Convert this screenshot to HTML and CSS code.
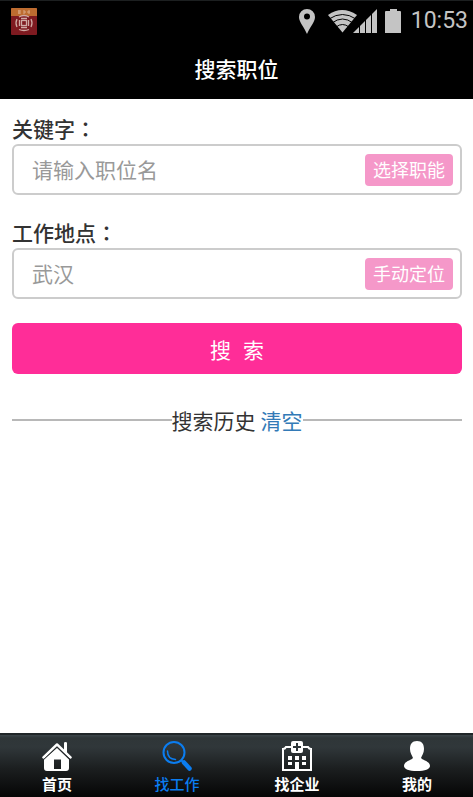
FILE: index.html
```html
<!DOCTYPE html>
<html lang="zh-CN">
<head>
<meta charset="utf-8">
<meta name="viewport" content="width=device-width, initial-scale=1">
<title>搜索职位</title>
<link rel="stylesheet" href="styles.css">
</head>
<body>
<div class="app">
  <header class="top">
    <div class="status">
      <svg class="app-icon" width="26" height="27" viewBox="0 0 26 27" aria-hidden="true">
        <rect width="26" height="27" rx="1" fill="#7e1a20"/>
        <path d="M0 1q0-1 1-1h24q1 0 1 1v7H0z" fill="#bd6c30"/>
        <path d="M7 3h3M7 5h3M8 2v4M12 3h2v2h-2M16 4h3M18 2v4" stroke="#d9a783" fill="none"/>
        <g fill="none" stroke="#cfa9a4" stroke-width="1.3">
          <path d="M8 9q5-3 10 0M8 21.500q5 2 10 0M6 11q-2 4 0 8M20 11q2 4 0 8M8.500 12v6M17.500 12v6M10 10.500h6M10 19.500h6"/>
          <rect x="10.500" y="12.500" width="5" height="5"/>
        </g>
      </svg>
      <div class="signals">
        <svg class="pin" width="16" height="25" viewBox="0 0 16 25" aria-hidden="true"><path fill-rule="evenodd" d="M8 0a8 8 0 0 1 8 8c0 5-5 10-8 17C5 18 0 13 0 8a8 8 0 0 1 8-8zm0 4.500a3 3 0 1 0 0 6 3 3 0 0 0 0-6z" fill="#c4c4c4"/></svg>
        <svg class="wifi" width="49" height="24" viewBox="0 0 49 24" aria-hidden="true">
          <path d="M0 6Q14-4 29 6L14.500 23.500z" fill="#c4c4c4"/>
          <path d="M1 10Q14.500 1 28 10M4 14Q14.500 6 25 14M8 18Q14.500 13 21 18" fill="none" stroke="#000" stroke-width="1"/>
          <path d="M25 24L49 0v24z" fill="#c4c4c4"/>
          <path d="M31.500 12v12M37.500 8v16M43.500 2v22" stroke="#000" stroke-width="1"/>
        </svg>
        <svg class="battery" width="16" height="24" viewBox="0 0 16 24" aria-hidden="true"><path d="M5 0h7v2h3q1 0 1 1v21H0V3q0-1 1-1h4z" fill="#c4c4c4"/></svg>
        <time class="clock">10:53</time>
      </div>
    </div>
    <h1 class="title">搜索职位</h1>
  </header>

  <main class="content">
    <form class="search">
      <div class="field">
        <label class="label" for="keyword">关键字<span class="colon" lang="zh-TW">：</span></label>
        <div class="box">
          <input class="input" id="keyword" type="text" placeholder="请输入职位名">
          <button class="pick" type="button">选择职能</button>
        </div>
      </div>
      <div class="field">
        <label class="label" for="place">工作地点<span class="colon" lang="zh-TW">：</span></label>
        <div class="box">
          <input class="input" id="place" type="text" placeholder="武汉">
          <button class="pick" type="button">手动定位</button>
        </div>
      </div>
      <button class="submit" type="submit"><span>搜</span><span>索</span></button>
    </form>
    <section class="history">
      <h2 class="history-title">搜索历史</h2>
      <a class="clear" href="#">清空</a>
    </section>
  </main>

  <nav class="tabs">
    <a class="tab" href="#">
      <svg width="30" height="30" viewBox="0 0 30 30" fill="#fff" aria-hidden="true">
        <path d="M22 2q0-1 1.500-1T25 2v11l-3-3z"/>
        <path d="M1.500 16.500L15 3.500l13.500 13" fill="none" stroke="#fff" stroke-width="2.500" stroke-linecap="round" stroke-linejoin="round"/>
        <path fill-rule="evenodd" d="M15 7L27 18.500V27q0 3-3 3H5q-3 0-3-3v-8.500zM12 18.500V28h7v-9.500z"/>
        <path d="M2 18.200L15 5.800l13 12.400" fill="none" stroke="#1d2122" stroke-width=".8"/>
      </svg>
      <span>首页</span>
    </a>
    <a class="tab active" href="#" aria-current="page">
      <svg width="30" height="30" viewBox="0 0 30 30" fill="none" stroke="#0b7df0" aria-hidden="true">
        <circle cx="12" cy="11.500" r="10.500" stroke-width="2"/>
        <path d="M5.500 10q0 8 8 8.500" stroke-width="1.500" stroke-linecap="round"/>
        <path d="M19 19l3 3" stroke-width="2"/>
        <path d="M22 21.500l5.500 6" stroke-width="4.500" stroke-linecap="round"/>
      </svg>
      <span>找工作</span>
    </a>
    <a class="tab" href="#">
      <svg width="30" height="30" viewBox="0 0 30 30" fill="#fff" aria-hidden="true">
        <path d="M9 6H4Q3 8 1 8v21h28V8q-2 0-3-2h-5" fill="none" stroke="#fff" stroke-width="2"/>
        <path fill-rule="evenodd" d="M11 0h8q2 0 2 2v8q0 2-2 2h-8q-2 0-2-2V2q0-2 2-2zM14 2v3h-3v2h3v3h2V7h3V5h-3V2z"/>
        <path d="M6 15h4v4H6zM13 15h4v4h-4zM20 15h4v4h-4zM6 21h4v3H6zM20 21h4v3h-4zM13 21h4v8h-4z"/>
      </svg>
      <span>找企业</span>
    </a>
    <a class="tab" href="#">
      <svg width="30" height="30" viewBox="0 0 30 30" fill="#fff" aria-hidden="true">
        <path d="M15 0c5 0 7 3 7 8 0 4-2 6-3 9 1 2 9 3 9 8 0 3-5 5-13 5S2 28 2 25c0-5 8-6 9-8-1-3-3-5-3-9 0-5 2-8 7-8z"/>
      </svg>
      <span>我的</span>
    </a>
  </nav>
</div>
</body>
</html>
```
FILE: styles.css
```css
* {
  box-sizing: border-box;
}

body {
  margin: 0;
  background: #fff;
  color: #333;
  font-family: "Noto Sans CJK SC", sans-serif;
  font-size: 21px;
  line-height: 30px;
}

button,
input {
  font: inherit;
}

.app {
  display: flex;
  flex-direction: column;
  min-height: 100vh;
  overflow: hidden;
}

.top {
  background: #000;
  color: #fff;
  border-top: 1px solid #1c1f20;
}

.status {
  display: flex;
  justify-content: space-between;
  align-items: center;
  height: 40px;
  padding: 0 5px 0 11px;
}

.signals {
  display: flex;
  align-items: center;
}

.wifi {
  margin-left: 13px;
}

.battery {
  margin: 0 10px 0 8px;
}

.clock {
  color: #c4c4c4;
  font-family: Roboto, sans-serif;
  font-size: 23px;
}

.title {
  margin: 0;
  padding: 12px 0 16px;
  font-size: 21px;
  font-weight: 500;
  text-align: center;
}

.content {
  flex: 1;
  padding: 14px 11px 14px 12px;
}

.field {
  margin-bottom: 22px;
}

.label {
  display: block;
  margin-bottom: 1px;
  color: #333;
  font-weight: 500;
}

.colon {
  font-family: "Noto Sans CJK TC", sans-serif;
}

.box {
  display: flex;
  align-items: center;
  height: 51px;
  padding-right: 7px;
  border: 2px solid #ccc;
  border-radius: 6px;
}

.input {
  flex: 1;
  min-width: 0;
  height: 100%;
  padding: 0 0 2px 18px;
  border: 0;
  outline: 0;
  background: none;
  color: #333;
}

.input::placeholder {
  color: #999;
  opacity: 1;
}

.pick {
  height: 32px;
  padding: 0 8px 2px;
  border: 0;
  border-radius: 4px;
  background: #f598c9;
  color: #fff;
  font-size: 18px;
  line-height: 30px;
}

.submit {
  display: flex;
  align-items: center;
  justify-content: center;
  gap: 12px;
  width: 100%;
  height: 51px;
  margin-top: 24px;
  padding: 0;
  border: 0;
  border-radius: 6px;
  background: #ff2d98;
  color: #fff;
}

.history {
  display: flex;
  align-items: center;
  margin-top: 31px;
}

.history::before,
.history::after {
  content: "";
  flex: 1;
  height: 2px;
  background: #b8b8b8;
}

.history-title {
  margin: 0 5px 0 0;
  font-size: 21px;
  font-weight: 400;
}

.clear {
  color: #337ab7;
  text-decoration: none;
}

.tabs {
  display: flex;
  margin: 0 -4px 0 -3px;
  padding: 6px 0 1px;
  border-top: 2px solid #202628;
  background: linear-gradient(#3c464a, #2f3638 3px, #30373a 12px, #1b1e1f 55%, #050505);
}

.tab {
  display: flex;
  flex: 1;
  flex-direction: column;
  align-items: center;
  gap: 1px;
  color: #fff;
  font-size: 15px;
  font-weight: 700;
  line-height: 24px;
  text-decoration: none;
}

.active {
  color: #0b7df0;
  font-weight: 500;
}
```
